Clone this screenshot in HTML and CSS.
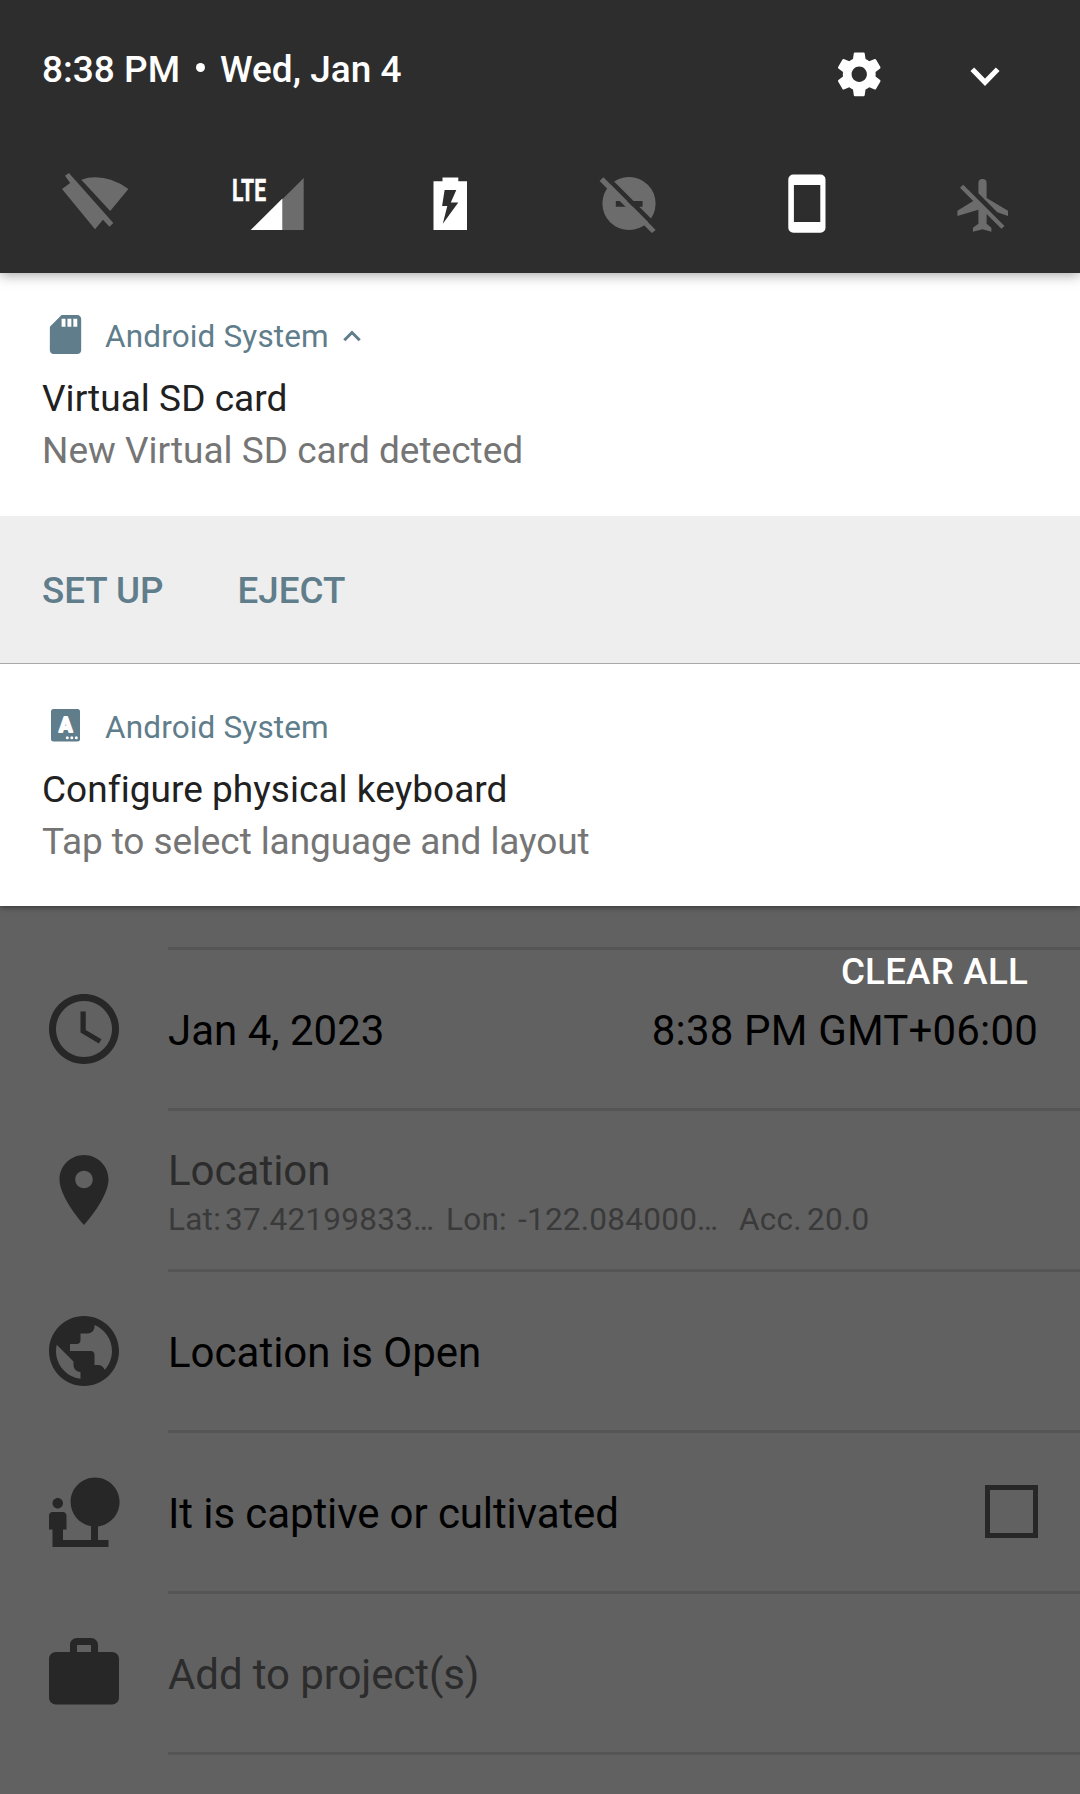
FILE: index.html
```html
<!DOCTYPE html>
<html lang="en">
<head>
<meta charset="utf-8">
<title>Notifications</title>
<link rel="stylesheet" href="styles.css">
</head>
<body>
<div class="screen">
  <header class="panel">
    <div class="panel-top">
      <div class="clock"><span>8:38 PM</span><span class="dot"></span><span>Wed, Jan 4</span></div>
      <svg class="gear" viewBox="0 0 24 24"><path d="M19.43 12.98c.04-.32.07-.64.07-.98s-.03-.66-.07-.98l2.11-1.65c.19-.15.24-.42.12-.64l-2-3.46c-.12-.22-.39-.3-.61-.22l-2.49 1c-.52-.4-1.08-.73-1.69-.98l-.38-2.65C14.46 2.18 14.25 2 14 2h-4c-.25 0-.46.18-.49.42l-.38 2.65c-.61.25-1.17.59-1.69.98l-2.49-1c-.23-.09-.49 0-.61.22l-2 3.46c-.13.22-.07.49.12.64l2.11 1.65c-.04.32-.07.65-.07.98s.03.66.07.98l-2.11 1.65c-.19.15-.24.42-.12.64l2 3.46c.12.22.39.3.61.22l2.49-1c.52.4 1.08.73 1.69.98l.38 2.65c.03.24.24.42.49.42h4c.25 0 .46-.18.49-.42l.38-2.65c.61-.25 1.17-.59 1.69-.98l2.49 1c.23.09.49 0 .61-.22l2-3.46c.12-.22.07-.49-.12-.64l-2.11-1.65zM12 15.5c-1.93 0-3.5-1.57-3.5-3.5s1.570-3.500 3.500-3.500 3.500 1.570 3.500 3.500-1.570 3.500-3.500 3.500z"/></svg>
      <svg class="expand" viewBox="0 0 30 20"><path d="M2.300 2.200L15 15.200 27.700 2.200"/></svg>
    </div>
    <div class="tiles">
      <svg class="tile off" viewBox="42 160 106 84">
        <path d="M65 175.800L68.900 173 113.300 223 109.500 226.700 103 219.800 95 229.300 62 189 70.200 183z"/>
        <path d="M81.300 179.700Q88 177.300 95 177.300 112.500 177.300 128.400 189L110.200 211z"/>
      </svg>
      <svg class="tile" viewBox="220 160 106 84">
        <text class="lte" x="232" y="200.800" textLength="34" lengthAdjust="spacingAndGlyphs">LTE</text>
        <path class="dim" d="M282.400 199.300L303.700 178V230H282.400z"/>
        <path d="M250.700 230L282.400 198.600V230z"/>
      </svg>
      <svg class="tile" viewBox="398 160 106 84">
        <path fill-rule="evenodd" d="M442.500 177.500H458.300V181.300H467V230H433.500V181.300H442.500zM444.600 190L442.100 206H447.300L442.800 223.700 458.300 202.500H450.800L456.300 190z"/>
      </svg>
      <svg class="tile off" viewBox="576 160 106 84">
        <mask id="gap" maskUnits="userSpaceOnUse" x="576" y="160" width="106" height="84">
          <circle cx="629" cy="203.500" r="26.600" fill="#fff"/>
          <path fill="#000" d="M615.800 201H642.600V206.700H615.800zM600 174L606.600 174 666 233.400V240z"/>
        </mask>
        <rect x="576" y="160" width="106" height="84" mask="url(#gap)"/>
        <path d="M599.600 181L603.400 177.300 655.700 230 651.900 233z"/>
      </svg>
      <svg class="tile" viewBox="754 160 106 84">
        <path fill-rule="evenodd" d="M793.300 174.500H820.500a5 5 0 0 1 5 5V227.700a5 5 0 0 1-5 5H793.300a5 5 0 0 1-5-5V179.500a5 5 0 0 1 5-5zM793.900 185V222H820.300V185z"/>
      </svg>
      <svg class="tile off" viewBox="932 160 106 84">
        <path d="M978.400 193.300V183.200a4.100 4.100 0 0 1 8.200 0V198L1008 210.700V216L997.300 212.300z"/>
        <path d="M960 187.700L963.200 184.700 1004.500 226 1001.400 228.700 986.600 214V223.700L991.400 227.700V231.700L982.500 229.300 972.900 231.700V227.700L978.400 223.700V209.700L957.400 216V210.700L973.200 201z"/>
      </svg>
    </div>
  </header>

  <main class="notifications">
    <article class="card">
      <div class="app">
        <svg class="app-icon" viewBox="0 0 24 24"><path d="M18 2h-8L4.020 8 4 20c0 1.100.9 2 2 2h12c1.100 0 2-.9 2-2V4c0-1.100-.9-2-2-2zm-6 6h-2V4h2v4zm3 0h-2V4h2v4zm3 0h-2V4h2v4z"/></svg>
        <span class="app-name">Android System</span>
        <svg class="collapse" viewBox="0 0 18 12"><path d="M1.300 10.200L9 2.500 16.700 10.200"/></svg>
      </div>
      <h2>Virtual SD card</h2>
      <p>New Virtual SD card detected</p>
    </article>
    <div class="actions"><a>SET UP</a><a>EJECT</a></div>
    <article class="card">
      <div class="app">
        <svg class="app-icon" viewBox="0 0 47 47">
          <rect x="9" y="7" width="29" height="32.500" rx="2.500"/>
          <text class="key" x="23.600" y="30.200" text-anchor="middle">A</text>
          <g class="white"><circle cx="25.300" cy="35.700" r="1.500"/><circle cx="29.800" cy="35.700" r="1.500"/><circle cx="34.300" cy="35.700" r="1.500"/></g>
        </svg>
        <span class="app-name">Android System</span>
      </div>
      <h2>Configure physical keyboard</h2>
      <p class="tight">Tap to select language and layout</p>
    </article>
  </main>

  <section class="form">
    <a class="clear">CLEAR ALL</a>
    <div class="row">
      <svg class="icon" viewBox="0 0 24 24"><path d="M11.990 2C6.470 2 2 6.480 2 12s4.470 10 9.990 10C17.520 22 22 17.520 22 12S17.520 2 11.990 2zM12 20c-4.420 0-8-3.580-8-8s3.580-8 8-8 8 3.580 8 8-3.580 8-8 8zm.5-13H11v6l5.250 3.150.75-1.230-4.500-2.670z"/></svg>
      <div class="field"><span>Jan 4, 2023</span><span class="time">8:38 PM GMT+06:00</span></div>
    </div>
    <div class="row">
      <svg class="icon" viewBox="0 0 24 24"><path d="M12 2C8.130 2 5 5.130 5 9c0 5.250 7 13 7 13s7-7.750 7-13c0-3.870-3.130-7-7-7zm0 9.500c-1.380 0-2.500-1.120-2.500-2.500s1.120-2.500 2.500-2.500 2.500 1.120 2.500 2.500-1.120 2.500-2.500 2.500z"/></svg>
      <div class="field stacked">
        <span class="hint">Location</span>
        <div class="coords"><span class="lat">Lat:</span><span class="lat-value">37.42199833…</span><span class="lon">Lon:</span><span class="lon-value">-122.084000…</span><span class="acc">Acc.</span><span>20.0</span></div>
      </div>
    </div>
    <div class="row">
      <svg class="icon" viewBox="0 0 24 24"><path d="M12 2C6.480 2 2 6.480 2 12s4.480 10 10 10 10-4.480 10-10S17.520 2 12 2zm-1 17.930c-3.950-.49-7-3.850-7-7.930 0-.62.08-1.210.21-1.790L9 15v1c0 1.100.9 2 2 2v1.930zm6.900-2.540c-.26-.81-1-1.390-1.900-1.390h-1v-3c0-.55-.45-1-1-1H8v-2h2c.55 0 1-.45 1-1V7h2c1.100 0 2-.9 2-2v-.41c2.930 1.190 5 4.060 5 7.410 0 2.080-.8 3.970-2.100 5.390z"/></svg>
      <div class="field"><span>Location is Open</span></div>
    </div>
    <div class="row">
      <svg class="icon" viewBox="0 0 24 24"><path d="M22.170 9.170c0-3.870-3.130-7-7-7s-7 3.130-7 7c0 3.470 2.520 6.340 5.830 6.890V20H6v-3h1v-4c0-.55-.45-1-1-1H3c-.55 0-1 .45-1 1v4h1v5h16v-2h-3v-3.880c3.470-.41 6.170-3.360 6.170-6.950zM4.500 11c.83 0 1.500-.67 1.500-1.500S5.330 8 4.500 8 3 8.670 3 9.500 3.670 11 4.500 11z"/></svg>
      <div class="field"><span class="tight">It is captive or cultivated</span><span class="checkbox"></span></div>
    </div>
    <div class="row">
      <svg class="icon" viewBox="0 0 24 24"><path d="M20 6h-4V4c0-1.110-.89-2-2-2h-4c-1.110 0-2 .89-2 2v2H4c-1.110 0-1.990.89-1.990 2L2 19c0 1.110.89 2 2 2h16c1.110 0 2-.89 2-2V8c0-1.110-.89-2-2-2zm-6 0h-4V4h4v2z"/></svg>
      <div class="field"><span class="hint tight">Add to project(s)</span></div>
    </div>
    <div class="row"><span class="icon"></span><div class="field"></div></div>
  </section>
</div>
</body>
</html>
```
FILE: styles.css
```css
* { box-sizing: border-box; }
body { margin: 0; font-family: Roboto, sans-serif; background: #616161; }
svg { display: block; }
.screen { width: 1080px; height: 1794px; overflow: hidden; display: flex; flex-direction: column; }

.panel { position: relative; z-index: 2; flex: none; height: 273px; background: #2d2d2d; color: #fff; fill: #fff; box-shadow: 0 2px 12px rgba(0, 0, 0, .36); }
.panel-top { display: flex; align-items: center; height: 148px; padding: 0 80px 0 42px; }
.clock { display: flex; align-items: center; margin: 0 auto 9px 0; font-size: 37px; font-weight: 500; line-height: 52px; }
.dot { width: 9px; height: 9px; border-radius: 50%; background: #fff; margin: 0 15px 4px 16px; }
.gear { width: 52.500px; height: 52.500px; margin-right: 85px; }
.expand { width: 30px; height: 20px; margin-top: 5px; fill: none; stroke: #fff; stroke-width: 5.200; }
.tiles { display: flex; justify-content: space-between; margin-top: 12px; padding: 0 42px; }
.tile { width: 106px; height: 84px; }
.off { fill: #6c6c6c; }
.dim { fill: #6c6c6c; }
.lte { font-size: 31.500px; font-weight: 700; stroke: #fff; stroke-width: .5; }

.notifications { position: relative; z-index: 1; flex: none; background: #fff; box-shadow: 0 1px 6px rgba(0, 0, 0, .5); }
.card { height: 243px; padding: 38px 42px 0; }
.actions + .card { height: 242px; }
.app { display: flex; align-items: center; height: 47px; margin-bottom: 15px; color: #607d8b; fill: #607d8b; }
.app-icon { width: 47px; height: 47px; margin-right: 16px; }
.app-name { font-size: 31.500px; line-height: 37px; padding-top: 3px; letter-spacing: .15px; }
.collapse { width: 18px; height: 12px; margin: 2px 0 0 14.500px; fill: none; stroke: #607d8b; stroke-width: 3; }
.key { fill: #fff; font-size: 20px; font-weight: 700; stroke: #fff; stroke-width: 1.800; stroke-linejoin: round; }
.white { fill: #fff; }
h2, p { margin: 0; font-size: 37px; font-weight: 400; line-height: 52px; }
h2 { color: #212121; letter-spacing: .04px; }
p { color: #757575; }
.tight { letter-spacing: -.1px; }
.actions { display: flex; align-items: center; gap: 74px; height: 148px; padding: 2px 42px 0; background: #eee; border-bottom: 1px solid #a9a9a9; color: #607d8b; font-size: 36.750px; font-weight: 500; line-height: 52px; }

.form { position: relative; flex: 1; padding-top: 41px; color: #000; font-size: 42px; line-height: 49px; }
.clear { position: absolute; top: 40px; right: 52px; color: #fff; font-size: 36.750px; font-weight: 500; line-height: 52px; letter-spacing: .2px; }
.row { display: flex; align-items: center; height: 161px; padding-left: 42px; }
.icon { width: 84px; height: 84px; margin: 3px 42px 0 0; fill: #272727; }
.field { flex: 1; align-self: stretch; display: flex; align-items: center; justify-content: space-between; border-top: 3px solid #555; padding: 2px 42px 0 0; }
.time { letter-spacing: .18px; }
.stacked { flex-direction: column; align-items: flex-start; justify-content: center; padding-top: 10px; }
.hint { color: #2c2c2c; }
.coords { display: flex; color: #3a3a3a; font-size: 31.500px; line-height: 49px; letter-spacing: .25px; }
.coords span { flex: none; }
.lat { width: 57px; }
.lat-value { width: 221px; }
.lon { width: 72px; }
.lon-value { width: 221px; }
.acc { width: 68px; }
.checkbox { width: 53px; height: 53px; margin-bottom: 3px; border: 5px solid #272727; }
```
